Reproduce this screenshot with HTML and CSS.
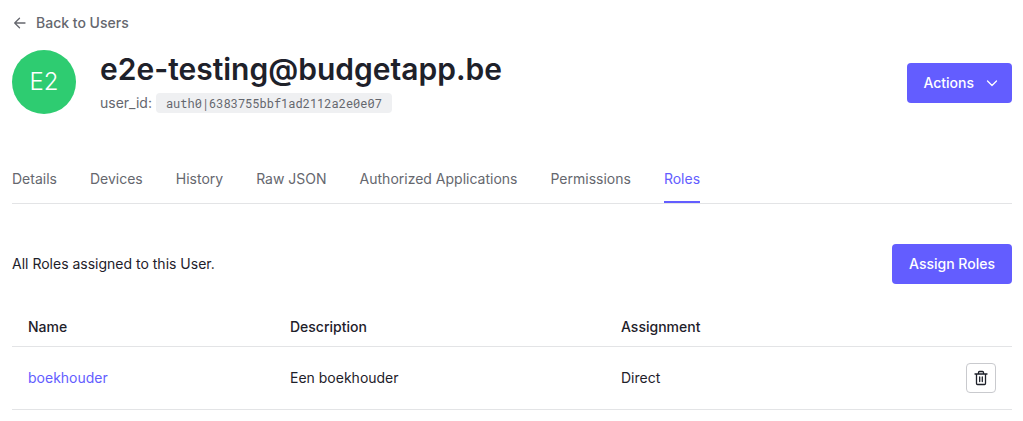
FILE: index.html
```html
<!DOCTYPE html>
<html lang="en">
<head>
<meta charset="utf-8">
<title>User roles</title>
<link rel="stylesheet" href="styles.css">
</head>
<body>
<main class="page">
  <a class="back" href="#">
    <svg class="back-icon" width="16" height="16" viewBox="0 0 16 16" fill="none" stroke="currentColor" stroke-width="1.3" stroke-linecap="round" stroke-linejoin="round"><path d="M13 8H3M7.500 3.200 2.700 8l4.800 4.800"/></svg>
    Back to Users
  </a>
  <header class="header">
    <div class="avatar">E2</div>
    <div class="identity">
      <h1 class="title">e2e-testing@budgetapp.be</h1>
      <p class="user-id">user_id: <code class="code">auth0|6383755bbf1ad2112a2e0e07</code></p>
    </div>
    <button class="button button-menu" type="button">Actions
      <svg class="chevron" width="16" height="16" viewBox="0 0 16 16" fill="none" stroke="currentColor" stroke-width="1.3" stroke-linecap="round" stroke-linejoin="round"><path d="m3.500 6 4.500 4.500 4.500-4.500"/></svg>
    </button>
  </header>
  <nav class="tabs">
    <a class="tab" href="#">Details</a>
    <a class="tab" href="#">Devices</a>
    <a class="tab" href="#">History</a>
    <a class="tab" href="#">Raw JSON</a>
    <a class="tab" href="#">Authorized Applications</a>
    <a class="tab" href="#">Permissions</a>
    <a class="tab tab-active" href="#" aria-current="page">Roles</a>
  </nav>
  <section class="toolbar">
    <p class="intro">All Roles assigned to this User.</p>
    <button class="button" type="button">Assign Roles</button>
  </section>
  <table class="roles">
    <thead>
      <tr><th class="col-name">Name</th><th class="col-description">Description</th><th>Assignment</th><th class="col-action"></th></tr>
    </thead>
    <tbody>
      <tr>
        <td><a class="role-link" href="#">boekhouder</a></td>
        <td>Een boekhouder</td>
        <td>Direct</td>
        <td class="col-action"><button class="icon-button" type="button" aria-label="Remove role"><svg width="16" height="16" viewBox="0 0 16 16" fill="none" stroke="currentColor" stroke-width="1.3" stroke-linecap="round" stroke-linejoin="round"><path d="M2 4h12M5.500 4V2.500a1 1 0 0 1 1-1h3a1 1 0 0 1 1 1V4M3.500 4v9.500a1 1 0 0 0 1 1h7a1 1 0 0 0 1-1V4M6.700 7v4.500M9.300 7v4.500"/></svg></button></td>
      </tr>
    </tbody>
  </table>
</main>
</body>
</html>
```
FILE: styles.css
```css
* { box-sizing: border-box; }
body { margin: 0; background: #fff; color: #1e212a; font: 14px/20px Inter, "Liberation Sans", sans-serif; }
h1, p { margin: 0; }
a { text-decoration: none; }
.page { padding: 13px 11px 11px 12px; }
.back { display: flex; width: max-content; align-items: center; gap: 8px; color: #65676e; font-weight: 500; }
.header { display: flex; align-items: center; gap: 24px; margin-top: 17px; }
.avatar { display: flex; flex: none; align-self: flex-start; align-items: center; justify-content: center; width: 64px; height: 64px; border-radius: 50%; background: #2ecc71; color: #fff; font-size: 24px; font-weight: 300; }
.identity { flex: 1; }
.title { font-size: 30px; line-height: 38px; font-weight: 600; }
.user-id { margin-top: 2px; line-height: 26px; color: #65676e; }
.code { display: inline-block; padding: 0 10px; border-radius: 4px; background: #eff0f2; font: 12px/20px "Roboto Mono", "DejaVu Sans Mono", monospace; }
.button { display: flex; align-items: center; gap: 10px; height: 40px; padding: 0 17px; border: 0; border-radius: 4px; background: #635dff; color: #fff; font: inherit; font-weight: 500; }
.button-menu { padding: 0 12px 0 16px; }
.tabs { display: flex; gap: 33px; margin-top: 39px; border-bottom: 1px solid #e3e4e6; }
.tab { padding: 14px 0 12px; border-bottom: 2px solid transparent; color: #65676e; }
.tab-active { border-color: #635dff; color: #635dff; }
.toolbar { display: flex; align-items: center; justify-content: space-between; margin-top: 40px; }
.roles { width: 100%; margin-top: 24px; border-collapse: collapse; table-layout: fixed; }
.roles th, .roles td { padding: 0 16px; border-bottom: 1px solid #e3e4e6; text-align: left; }
.roles th { height: 38px; font-weight: 500; }
.roles td { height: 63px; }
.col-name { width: 26.2%; }
.col-description { width: 33.1%; }
.roles .col-action { width: 80px; text-align: right; }
.role-link { color: #635dff; }
.icon-button { display: inline-flex; align-items: center; justify-content: center; width: 30px; height: 30px; padding: 0; border: 1px solid #c9cace; border-radius: 4px; background: #fff; color: #1e212a; vertical-align: middle; }
```
